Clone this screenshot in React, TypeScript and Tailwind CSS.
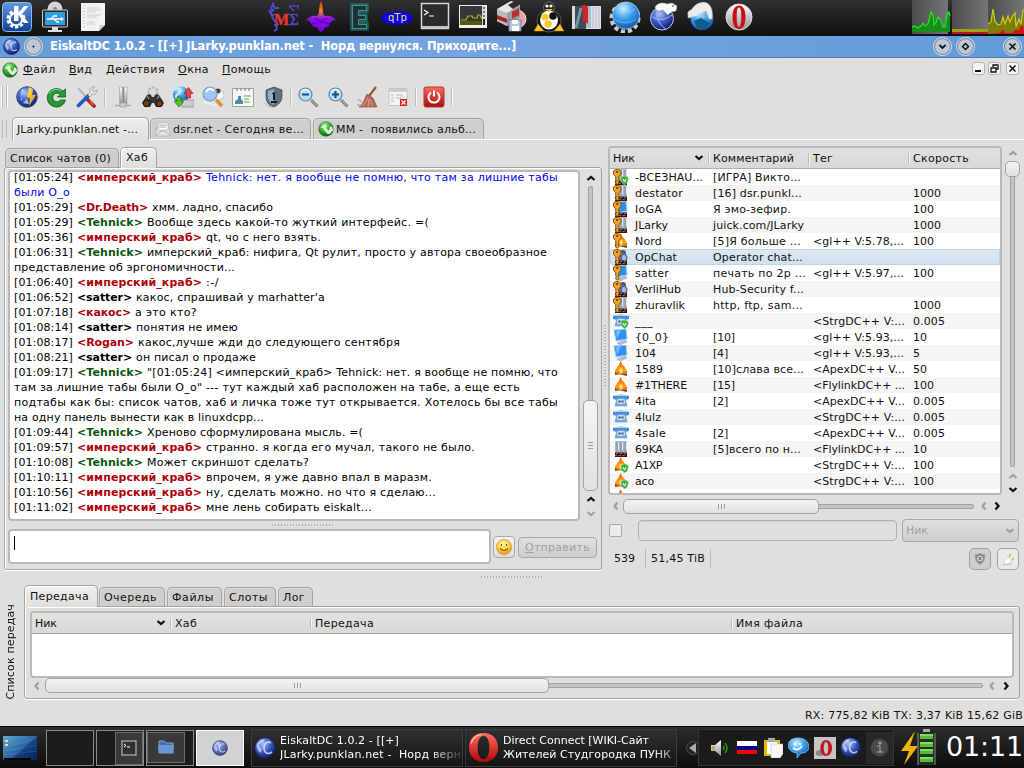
import React, { useLayoutEffect, useRef } from "react";

/* Inline text whose letter spacing is computed so that it fills width w. */
function Fit({ w, className = "", children }: { w: number; className?: string; children: React.ReactNode }) {
  const ref = useRef<HTMLSpanElement>(null);
  useLayoutEffect(() => {
    const el = ref.current;
    if (!el) return;
    el.style.letterSpacing = "0px";
    const natural = el.getBoundingClientRect().width;
    const n = (el.textContent || "").length || 1;
    el.style.letterSpacing = `${(w - natural) / n}px`;
  }, [w]);
  return (
    <span ref={ref} className={`inline-block shrink-0 whitespace-pre ${className}`}>
      {children}
    </span>
  );
}

const Defs = () => (
  <svg className="absolute size-0" aria-hidden>
    <defs>
      <radialGradient id="navy" cx=".4" cy=".3" r=".75">
        <stop offset="0" stopColor="#a9c2f5" /><stop offset=".5" stopColor="#3c5cc0" /><stop offset="1" stopColor="#0b1552" />
      </radialGradient>
      <radialGradient id="blue" cx=".4" cy=".25" r=".8">
        <stop offset="0" stopColor="#c8efff" /><stop offset=".5" stopColor="#3a9bea" /><stop offset="1" stopColor="#0b4fa4" />
      </radialGradient>
      <radialGradient id="green" cx=".4" cy=".25" r=".8">
        <stop offset="0" stopColor="#9df090" /><stop offset=".55" stopColor="#2fa32b" /><stop offset="1" stopColor="#0c5a10" />
      </radialGradient>
      <radialGradient id="smile" cx=".45" cy=".3" r=".75">
        <stop offset="0" stopColor="#fff6b0" /><stop offset=".6" stopColor="#fcc93a" /><stop offset="1" stopColor="#e08a10" />
      </radialGradient>
      <linearGradient id="silver" x2="0" y2="1"><stop stopColor="#fff" /><stop offset="1" stopColor="#8d8f92" /></linearGradient>
      <linearGradient id="red" x2="0" y2="1"><stop stopColor="#ff6a5e" /><stop offset="1" stopColor="#b00808" /></linearGradient>
      <linearGradient id="kde" x2="0" y2="1"><stop stopColor="#5d9be6" /><stop offset="1" stopColor="#123f93" /></linearGradient>
      <linearGradient id="gold" x2="1" y2="1"><stop stopColor="#ffe65a" /><stop offset="1" stopColor="#e88a00" /></linearGradient>
      <linearGradient id="hat" x2="0" y2="1"><stop stopColor="#f03a00" /><stop offset=".3" stopColor="#f08828" /><stop offset=".55" stopColor="#8a10f0" /><stop offset="1" stopColor="#7a00e0" /></linearGradient>
      <linearGradient id="fire" x2="0" y2="1"><stop stopColor="#f05a00" /><stop offset=".7" stopColor="#ffa21e" /><stop offset="1" stopColor="#e87000" /></linearGradient>
      <linearGradient id="desk" x2="1" y2="1"><stop stopColor="#6aa8cc" /><stop offset=".5" stopColor="#2c68a8" /><stop offset="1" stopColor="#06204a" /></linearGradient>
      <linearGradient id="load" x2="1" y2="0"><stop stopColor="#4b4b4b" /><stop offset="1" stopColor="#767676" /></linearGradient>
    </defs>
  </svg>
);

const Svg = ({ s, v = 32, children, className = "" }: { s: number; v?: number; children: React.ReactNode; className?: string }) => (
  <svg width={s} height={s} viewBox={`0 0 ${v} ${v}`} className={`shrink-0 ${className}`} fill="none">{children}</svg>
);

const Globe = ({ s }: { s: number }) => (
  <Svg s={s} v={22}>
    <circle cx="11" cy="11" r="10.3" fill="url(#navy)" stroke="#142266" strokeWidth=".8" />
    <path d="M5 5c2-3 4-3 5-2s-1 2-3 3-3 3-1 4 2 3 1 5-3-1-4-4 0-4 2-6z" fill="#dbe6ff" opacity=".65" />
    <path d="M17 6c-3-2-7 0-7 5s4 7 8 4" stroke="#e6eeff" strokeWidth="1.600" opacity=".75" />
  </Svg>
);
const GreenGlobe = ({ s }: { s: number }) => (
  <Svg s={s} v={18}>
    <circle cx="9" cy="9" r="8.2" fill="url(#green)" stroke="#176019" strokeWidth=".6" />
    <path d="M3 7l5-3 2 2-2 3zM6 9l3-1 3 3 2-5 2 1 1 3-4 5-3-1z" fill="#eaffe6" opacity=".9" />
  </Svg>
);

const topLeft = [
  <Svg s={32}>
    <rect x="1.5" y="1.5" width="29" height="29" rx="4" fill="url(#kde)" stroke="#8ab6ef" />
    <circle cx="15" cy="18" r="8" stroke="#fff" strokeWidth="3" strokeDasharray="3.2 1.9" />
    <circle cx="15" cy="18" r="6.2" stroke="#fff" strokeWidth="2" />
    <path d="M13 5h4.500v15H13z" fill="#fff" /><path d="M17 13l6-8h4.500l-6.500 8 6.500 9H23z" fill="#fff" />
  </Svg>,
  <Svg s={32}>
    <circle cx="16" cy="8" r="7.5" fill="#d9d4d4" /><circle cx="16" cy="8" r="2" fill="#888" />
    <rect x="3.5" y="9" width="25" height="17" rx="1" fill="#282c31" stroke="#c6cacc" /><rect x="6" y="11" width="20" height="13" fill="#329fdf" />
    <path d="M8 18h15M12 18l3-3h3M15 18l3 3h2" stroke="#fff" strokeWidth="1.3" /><path d="M22 16l3 2-3 2z" fill="#fff" />
    <path d="M13 26h6v3h-6zM9 29h14v2H9z" fill="#dedede" />
  </Svg>,
  <Svg s={32}>
    <path d="M4 2h24v22l-6 6H4z" fill="#f2f2f1" /><path d="M28 24h-5l-1 6z" fill="#c6c6c4" />
    <path d="M10 7h12M10 9h14M10 11h9M10 14h14M10 16h10M10 21h7M10 23h8" stroke="#c4c4c4" strokeWidth=".8" /><path d="M7 4v24" stroke="#aaa" strokeDasharray="1 2" />
  </Svg>,
];

const topMid = [
  <Svg s={32}>
    <text x="7" y="24" fontFamily="Liberation Serif" fontWeight="700" fontSize="16" fill="#e0382e" stroke="#e0382e" strokeWidth=".5">M</text>
    <text x="22.500" y="24" fontFamily="Liberation Serif" fontSize="16" fill="#4747c0" stroke="#4747c0" strokeWidth=".7">Σ</text>
    <path d="M7 2c-3 1-1 3 1 3-5 0-5 4-1 4-5 1-4 5 0 5M2 9l6 12M8 21c4 1 3 4 0 4 3 1 2 4-1 5M7 7h5" stroke="#4d4dd2" strokeWidth="1.800" />
    <path d="M22 5h9v3M22 5l5 5" stroke="#4747c0" strokeWidth="1.600" />
  </Svg>,
  <Svg s={32}>
    <path d="M16 1c1.500 0 1.500 6 2 10 .5 3 1 4 2 4 3-1 8 0 11 4-3 0-5 1-6 3-1 3-2 4-4 4s-2 4-5 5c-3-1-3-5-5-5s-4-1-5-4c-1-2-3-3-5-3 3-3 7-5 10-4 2 0 2-1 3-4 .5-4 .5-10 2-10z" fill="url(#hat)" />
    <path d="M10 17c4 4 8 4 12 0M7 23c5-2 13-2 18 0" stroke="#4b00a2" />
  </Svg>,
  <Svg s={32}><path d="M9 4h15v6h-8v4h7v5h-7v3h8v6H9z" fill="#1f2526" stroke="#299c9f" strokeWidth="3.500" opacity=".5" /><path d="M9.500 4.500h14v5h-8v5h7v4h-7v5h8v4h-14z" fill="#2a2e2e" stroke="#37aeae" strokeWidth=".8" /></Svg>,
  <Svg s={32}><ellipse cx="16" cy="17" rx="15.500" ry="7" fill="#0c00ea" /><text x="7" y="20" fontFamily="DejaVu Sans" fontSize="10" fill="#e9e84b">qTp</text></Svg>,
  <Svg s={32}><rect x="2.500" y="2.500" width="27" height="25" fill="#292b2d" stroke="#d6d6d6" strokeWidth="1.500" /><path d="M3 25h26v2H3z" fill="#c2c2c2" /><path d="M5 9l4 2.500L5 14M10 15h5" stroke="#fff" strokeWidth="1.200" /></Svg>,
  <Svg s={32}><rect x="2.500" y="4.500" width="27" height="22" fill="#35383b" stroke="#eee" /><path d="M25 5h4v21h-4z" fill="#dcdcdc" /><path d="M3 24h26v3H3z" fill="#eee" /><path d="M4 19h5l2-4h4l1 2h4l1-3h2l2 4" stroke="#b9b611" strokeWidth="1.200" /><path d="M3 20h21v4H3z" fill="#55580d" /><path d="M26 7h2M26 11h2M26 15h2" stroke="#777" strokeWidth="2" /><path d="M26 18h2v6h-2z" fill="#222" /></Svg>,
  <Svg s={32}><circle cx="22" cy="18" r="9" fill="#e7a3ad" stroke="#fbe6e4" /><path d="M2 8l14-8 9 3v14l-13 8-10-5z" fill="#e7e7e8" /><path d="M2 8l10 4v13L2 20z" fill="#b7babf" /><path d="M2 14l10 4v4L2 18z" fill="#b3231e" /><path d="M12 12l13-8v13l-13 8z" fill="#9a9da2" /><path d="M13 4l7-4 6 3-8 5z" fill="#2d2d2d" /><path d="M17 11l7-4v7l-7 4z" fill="#b8322b" /><path d="M14 19h12v11H14z" fill="#bcc6d5" stroke="#717d90" /><path d="M17 19h6v4h-6zM17 25h7v5h-7z" fill="#fff" /></Svg>,
  <Svg s={32}>
    <ellipse cx="16" cy="20" rx="12" ry="11" fill="#111" stroke="#999" strokeWidth=".5" /><circle cx="16" cy="6.500" r="5.500" fill="#222" stroke="#999" strokeWidth=".6" /><ellipse cx="16" cy="19" rx="9" ry="9.500" fill="#fff" />
    <circle cx="14" cy="5" r="1.600" fill="#fff" /><circle cx="18" cy="5" r="1.600" fill="#fff" /><path d="M12 8h8l-4 3z" fill="#eeba16" />
    <circle cx="12" cy="16" r="3.600" fill="#ffc82b" /><circle cx="20" cy="15" r="3.800" fill="#111" /><circle cx="15" cy="23" r="3.700" fill="#ffc82b" /><path d="M1 30l4-7 6 7zM31 30l-4-7-6 7z" fill="#ffc21e" stroke="#b57b02" strokeWidth=".5" />
  </Svg>,
  <Svg s={32}><path d="M1 5h14v23H1z" fill="#3c4c58" /><path d="M1 5h3v23H1z" fill="#d5dde2" /><path d="M15 5h15v23H15z" fill="#dfe1ea" /><path d="M15 5h5v22h-5z" fill="#aabecd" /><path d="M5 27l5-20" stroke="#7298a8" strokeWidth="3" /><path d="M10 5c3-2 7-1 7 2v16l-3-3-2 2V9z" fill="#d52222" /><path d="M22 6v21M25 6v21M28 6v21" stroke="#bbb5ca" /></Svg>,
  <Svg s={32}><circle cx="16" cy="17" r="13.500" stroke="#c5cace" strokeWidth="4" strokeDasharray="4.200 2.800" /><circle cx="17" cy="14.500" r="13.500" fill="url(#blue)" stroke="#a8dcff" strokeWidth=".7" /><path d="M5 18c7 5 15 5 22 0M8 8c5 4 12 4 18 0" stroke="#8fcffa" opacity=".6" /></Svg>,
  <Svg s={32}><circle cx="15" cy="17.500" r="11.500" fill="url(#navy)" stroke="#b9c7ff" /><path d="M5 16c7 4 13 3 20-2M11 7c-3 8 1 17 8 21" stroke="#a4b8ff" /><path d="M8 7c1-5 8-6 12-4l5-1 5 3-1 5-5 1-3 3-5-5-5 1z" fill="#fafafa" stroke="#aab" strokeWidth=".5" /><circle cx="26" cy="5" r=".8" fill="#222" /></Svg>,
  <Svg s={32}><circle cx="17" cy="17.500" r="11.500" fill="url(#blue)" /><path d="M9 20l7-3 9 5-5 7-8-2z" fill="#145a87" /><path d="M3 14c-1-4 2-4 4-6 3-5 10-8 15-6 5 3 6 9 5 16h-3l-3-8-4 2-5 3-5 1-4 1z" fill="#e9edf0" stroke="#aeb7bd" strokeWidth=".6" /></Svg>,
  <Svg s={32}><circle cx="16" cy="16" r="13" fill="url(#silver)" stroke="#ddd" /><path d="M16 4.500c-4.500 0-6.500 5-6.500 11.500s2 12 6.500 12 6.500-5.500 6.500-12-2-11.500-6.500-11.500zm0 2c1.800 0 2.300 4 2.300 9.500s-.5 10-2.300 10-2.300-4.500-2.300-10 .5-9.500 2.300-9.500z" fill="#c90f16" fillRule="evenodd" /></Svg>,
];

const zoomBase = <><path d="M14 14l6.500 6.500" stroke="#777" strokeWidth="2.800" /><path d="M14 14l6.500 6.500" stroke="#c4c4c4" strokeWidth="1" /><circle cx="8.500" cy="8.500" r="6.500" fill="#b4dcf5" stroke="#5f87a8" strokeWidth="1.200" /><path d="M4 6q4-5 9 0" stroke="#eef9ff" strokeWidth="1.500" /></>;

const tools: (React.ReactNode | null)[] = [
  <Svg s={22} v={22}><circle cx="11" cy="11" r="10.300" fill="url(#navy)" stroke="#2e548e" /><path d="M5 4c5-3 4 4 1 5s2 5-1 6zM7 17l4-4 2 5z" fill="#a5c0ed" /><path d="M13 1l4 2-1 6h4l-7 11 1-8-3-1z" fill="url(#gold)" /></Svg>,
  <Svg s={22} v={22}><path d="M19.500 3v8h-8l2.600-2.600A4.300 4.300 0 1 0 14.500 14h5A9.300 9.300 0 1 1 16.800 5z" fill="#279a3a" stroke="#075d1b" strokeWidth=".8" /><path d="M3 8c3-5 8-6 12-3" stroke="#8fdc91" /></Svg>,
  <Svg s={22} v={22}><path d="M10 12l8 8" stroke="#b51f22" strokeWidth="3.800" strokeLinecap="round" /><path d="M2 2l9 10" stroke="#b5b5b5" strokeWidth="2" /><path d="M2.500 19.500L12 10" stroke="#1f5fc4" strokeWidth="3.800" strokeLinecap="round" /><path d="M12 9l2-3c-1-4 2-6 5-5l-3 3 2 2 3-2c0 4-3 5-5 4l-2 3z" fill="#e4e5e5" stroke="#888" strokeWidth=".6" /><path d="M14 15l3 4" stroke="#f36b62" strokeWidth="1.200" /></Svg>,
  null,
  <Svg s={22} v={22}><path d="M7.500 1h3v17h-3zM12 1h3v17h-3z" fill="url(#silver)" stroke="#a8a8a8" strokeWidth=".7" /><path d="M11.300 1v18" stroke="#777" /><path d="M3 19.500h16" stroke="#aaa" strokeWidth="1.500" /><path d="M8 17h6v4H8z" fill="#ccc" stroke="#999" strokeWidth=".6" /></Svg>,
  <Svg s={22} v={22}><circle cx="11" cy="6" r="4.500" fill="#ddd" stroke="#b5b5b5" strokeWidth="2.500" strokeDasharray="2.500 1.500" /><path d="M5 9l3-1 2 3h2l2-3 3 1 5 8-3 4h-5l-2-4h-2l-2 4H3l-3-4z" fill="#343434" /><circle cx="4.500" cy="17.500" r="3.200" fill="#7a3e15" stroke="#111" /><circle cx="17.500" cy="17.500" r="3.200" fill="#7a3e15" stroke="#111" /><path d="M5 10l2 3M17 10l-2 3" stroke="#aaa" /></Svg>,
  <Svg s={22} v={22}><circle cx="9" cy="8.500" r="8" fill="url(#blue)" /><path d="M2 4c5-3 8-2 6 2S2 8 5 13" stroke="#d0e5ff" strokeWidth="2" /><path d="M10 14h12v7H10z" fill="#ccc" stroke="#888" strokeWidth=".7" /><path d="M16.500 1.500l4.500 6h-2.500V12h-4V7.500H12z" fill="#e7454b" stroke="#9e1d22" strokeWidth=".7" /><path d="M5 11h4v4h3l-5 6-5-6h3z" fill="#59bd2c" stroke="#27720c" strokeWidth=".7" /></Svg>,
  <Svg s={22} v={22}><circle cx="17" cy="9" r="5" fill="#f3f3f3" stroke="#aaa" strokeWidth=".7" /><circle cx="16" cy="5" r="2.500" fill="#444" /><path d="M2 16c5 1 7 3 13 3" stroke="#eee" strokeWidth="2" /><circle cx="8" cy="8" r="7" fill="#9bc7f0" stroke="#7f9fc0" strokeWidth="1.200" /><path d="M4 6q4-6 8-1" stroke="#fff" strokeWidth="2" /><path d="M14 14l6 6" stroke="#d6952e" strokeWidth="3.500" /></Svg>,
  <Svg s={22} v={22}><path d="M.5 2.500h21v18H.5z" fill="#f3f6f2" stroke="#9ba69b" /><path d="M5 5V2.500M9 5V2.500M13 5V2.500M17 5V2.500" stroke="#687068" /><path d="M3 18v-3l3-2v-3h3v3l2 2v3z" fill="#5089af" /><path d="M12 10h7M12 13h5M12 16h6" stroke="#8ec77f" strokeWidth="1.300" /></Svg>,
  <Svg s={22} v={22}><path d="M12 1l8 3v6c0 6-4 9-8 11-6-2-8-5-8-11V4z" fill="#5f7282" stroke="#39434e" strokeWidth=".7" /><path d="M12 3v16c-4-2-6-5-6-9V5z" fill="#9cacb8" /><path d="M10 7l3-1v8h-2V8h-1zM9 15h6v2H9z" fill="#15202a" /><path d="M2 17q4 4 8 4" stroke="#b5b5b5" /></Svg>,
  null,
  <Svg s={22} v={22}>{zoomBase}<path d="M5 8.500h7" stroke="#124c80" strokeWidth="2" /></Svg>,
  <Svg s={22} v={22}>{zoomBase}<path d="M5 8.500h7M8.500 5v7" stroke="#124c80" strokeWidth="2" /></Svg>,
  <Svg s={22} v={22}><path d="M19 1l-7 9" stroke="#8a5a30" strokeWidth="2.200" /><path d="M10 8l6 4 4 9H2c5-3 5-8 8-13z" fill="#b8685a" stroke="#8b4a3a" strokeWidth=".6" /><path d="M6 20l5-8M11 21l1-8M15 20l-2-7" stroke="#d8a08c" /><path d="M1 13l4 3M0 19h4" stroke="#bbb" strokeWidth="2" /></Svg>,
  <Svg s={22} v={22}><path d="M2 2.500h18v17H2z" fill="#f4f4f3" stroke="#c5c5c5" /><path d="M2 3h18v3H2z" fill="#ccc" /><path d="M4 9h3M9 9h7M4 12h3M9 12h5M4 15h3" stroke="#b5b5b5" /><path d="M13 13h7v7h-7z" fill="#d92020" /><path d="M14.500 14.500l4 4M18.500 14.500l-4 4" stroke="#fff" strokeWidth="1.200" /></Svg>,
  null,
  <Svg s={22} v={22}><rect x="1" y="1" width="20" height="20" rx="2" fill="url(#red)" stroke="#a04040" /><path d="M8 6.500a5.500 5.500 0 1 0 6 0M11 4.500v6" stroke="#fff" strokeWidth="2" /></Svg>,
  null,
];

const Chev = ({ d, dim }: { d: "u" | "d" | "l" | "r"; dim?: boolean }) => {
  const p = { u: "M1.500 6L5 3l3.500 3", d: "M1.500 3L5 6l3.500-3", l: "M6.500 1.500L3.500 5l3 3.500", r: "M3.500 1.500L6.500 5l-3 3.500" }[d];
  return <Svg s={10} v={10}><path d={p} stroke={dim ? "#a1a09f" : "#111"} strokeWidth="2.300" /></Svg>;
};

function TitleButton({ children }: { children?: React.ReactNode }) {
  return (
    <span className="flex size-[17px] items-center justify-center rounded-full border-[1.5px] border-[#7a7a7a] bg-[#bac8da] outline-1 outline-[#dedcda]">
      <Svg s={9} v={9}>{children}</Svg>
    </span>
  );
}

const MdiButton = ({ children }: { children: React.ReactNode }) => (
  <span className="flex size-[13px] items-center justify-center rounded-[3px] border border-[#b4b3b2] bg-[#f5f5f4]"><Svg s={9} v={9}>{children}</Svg></span>
);

const Grip = () => <div className="h-[22px] w-[5px] border-x border-[#b9b8b7] shadow-[1px_0_#fff,-1px_0_#fff]" />;

type Nick = [string, number, string];
const KRAB: Nick = ["<имперский_краб>", 129, "text-[#b00008]"];
const TEH: Nick = ["<Tehnick>", 70, "text-[#0b560b]"];
const SAT: Nick = ["<satter>", 59, "text-black"];
const DRD: Nick = ["<Dr.Death>", 75, "text-[#b00008]"];
const KAK: Nick = ["<какос>", 58, "text-[#b00008]"];
const ROG: Nick = ["<Rogan>", 61, "text-[#b00008]"];

const chat: { t?: string; n?: Nick; m: string; w: number; blue?: boolean }[] = [
  { t: "[01:05:24]", n: KRAB, m: "Tehnick: нет. я вообще не помню, что там за лишние табы", w: 352, blue: true },
  { m: "были O_o", w: 56, blue: true },
  { t: "[01:05:29]", n: DRD, m: "хмм. ладно, спасибо", w: 121 },
  { t: "[01:05:29]", n: TEH, m: "Вообще здесь какой-то жуткий интерфейс. =(", w: 282 },
  { t: "[01:05:36]", n: KRAB, m: "qt, чо с него взять.", w: 115 },
  { t: "[01:06:31]", n: TEH, m: "имперский_краб: нифига, Qt рулит, просто у автора своеобразное", w: 400 },
  { m: "представление об эргономичности...", w: 221 },
  { t: "[01:06:40]", n: KRAB, m: ":-/", w: 13 },
  { t: "[01:06:52]", n: SAT, m: "какос, спрашивай у marhatter'а", w: 189 },
  { t: "[01:07:18]", n: KAK, m: "а это кто?", w: 62 },
  { t: "[01:08:14]", n: SAT, m: "понятия не имею", w: 102 },
  { t: "[01:08:17]", n: ROG, m: "какос,лучше жди до следующего сентября", w: 262 },
  { t: "[01:08:21]", n: SAT, m: "он писал о продаже", w: 120 },
  { t: "[01:09:17]", n: TEH, m: "\"[01:05:24] <имперский_краб> Tehnick: нет. я вообще не помню, что", w: 411 },
  { m: "там за лишние табы были O_o\" --- тут каждый хаб расположен на табе, а еще есть", w: 506 },
  { m: "подтабы как бы: список чатов, хаб и личка тоже тут открывается. Хотелось бы все табы", w: 544 },
  { m: "на одну панель вынести как в linuxdcpp...", w: 250 },
  { t: "[01:09:44]", n: TEH, m: "Хреново сформулирована мысль. =(", w: 216 },
  { t: "[01:09:57]", n: KRAB, m: "странно. я когда его мучал, такого не было.", w: 269 },
  { t: "[01:10:08]", n: TEH, m: "Может скриншот сделать?", w: 162 },
  { t: "[01:10:11]", n: KRAB, m: "впрочем, я уже давно впал в маразм.", w: 226 },
  { t: "[01:10:56]", n: KRAB, m: "ну, сделать можно. но что я сделаю...", w: 230 },
  { t: "[01:11:02]", n: KRAB, m: "мне лень собирать eiskalt...", w: 166 },
];

/* User icon kinds: s server, m monitor, p phone, f fire, t penguin; k key, b bricks, v shield. */
function UserIcon({ kind }: { kind: string }) {
  const has = (c: string) => kind.includes(c);
  return (
    <Svg s={16} v={16}>
      {has("s") && <><rect x="2" y="0" width="12" height="12" rx="1" fill="#a9b8c8" /><path d="M4 1v10M8 1v10M12 1v10" stroke="#8090a2" /><path d="M5.500 1v8M9.500 1v8M13.500 1v8" stroke="#dfe7ef" /></>}
      {has("m") && <><path d="M1 1l12-1 1 10-11 2z" fill="#2f8ff5" stroke="#adc9e2" /><path d="M3 2l5-1-4 9z" fill="#76bbff" /><path d="M4 14l8-3 2 2-7 3z" fill="#b6bdd9" stroke="#9199b8" strokeWidth=".5" /></>}
      {has("p") && <><path d="M0 3q8-3 16 0v3l-4 1H4L0 6z" fill="#4390da" /><path d="M2 2.500h12" stroke="#a9d5fb" /><path d="M4 5h8l2 8H2z" fill="#6cace7" stroke="#5a98d4" strokeWidth=".6" /><rect x="4" y="6" width="8" height="5" rx="2" fill="#c9def0" /><circle cx="6.500" cy="8.500" r="1.200" fill="#52687e" /><circle cx="9.500" cy="8.500" r="1.200" fill="#52687e" /></>}
      {has("f") && <><path d="M2 13l12-2M2 11l12 3" stroke="#7b4a23" strokeWidth="2.200" /><path d="M7.500 0l2 4 1.500 1c1 2 3 4 3 6l-3 2H5l-3-2c0-3 2-4 3-6l1-1z" fill="url(#fire)" /><path d="M8 6l2 4-2 3-2-3z" fill="#ffe37a" /></>}
      {has("t") && <><circle cx="10" cy="4" r="3" fill="#505a70" /><ellipse cx="10" cy="9" rx="4.500" ry="5" fill="#506ca0" /><ellipse cx="11" cy="9" rx="2" ry="3" fill="#aabbd8" /></>}
      {has("b") && <><path d="M2 11.500h12v4.500H2z" fill="#2b1a18" /><path d="M3 12.500h2M7 12.500h2M11 12.500h2M2 14.500h2M5.500 14.500h2.500M9.500 14.500h2.500" stroke="#d2592a" strokeWidth="1.200" /></>}
      {has("v") && <><path d="M8 8q3.500-2 7 0c1 4-1 6-3.500 8C9 14 7.500 12 8 8z" fill="#3cad3e" stroke="#b5e5b3" strokeWidth=".6" /><path d="M10 10l1.500 3L13 10" stroke="#fff" /></>}
      {has("k") && <><path d="M.5 2L3 .5h2.500L8 2.500v3L5.800 7.500V14l-1.500 1.500L2.800 14v-1.500l1-1-1-1V7.500L.5 5.500z" fill="#f0a329" stroke="#7d4a0a" strokeWidth=".9" /><circle cx="4.200" cy="3" r="1.100" fill="#5a3105" /></>}
    </Svg>
  );
}

type U = [string, string, number, string, number, string, number, string];
const users: U[] = [
  ["skbv", "-ВСЕЗНАU...", 68, "[ИГРА] Викто...", 88, "", 0, ""],
  ["skb", "destator", 48, "[16] dsr.punkl...", 89, "", 0, "1000"],
  ["mkb", "IoGA", 27, "Я эмо-зефир.", 78, "", 0, "100"],
  ["skb", "JLarky", 33, "juick.com/JLarky", 91, "", 0, "1000"],
  ["fk", "Nord", 27, "[5]Я больше ...", 88, "<gl++ V:5.78,...", 91, "100"],
  ["tkb", "OpChat", 42, "Operator chat...", 90, "", 0, ""],
  ["mk", "satter", 34, "печать по 2р ...", 93, "<gl++ V:5.97,...", 91, "100"],
  ["tkb", "VerliHub", 46, "Hub-Security f...", 91, "", 0, ""],
  ["skb", "zhuravlik", 50, "http, ftp, sam...", 90, "", 0, "1000"],
  ["pv", "___", 18, "", 0, "<StrgDC++ V:...", 92, "0.005"],
  ["m", "{0_0}", 34, "[10]", 22, "<gl++ V:5.93,...", 91, "10"],
  ["m", "104", 21, "[4]", 15, "<gl++ V:5.93,...", 91, "5"],
  ["f", "1589", 28, "[10]слава все...", 91, "<ApexDC++ V...", 92, "50"],
  ["f", "#1THERE", 52, "[15]", 22, "<FlylinkDC++ ...", 92, "100"],
  ["p", "4ita", 21, "[2]", 15, "<ApexDC++ V...", 92, "0.005"],
  ["p", "4lulz", 26, "", 0, "<StrgDC++ V:...", 92, "0.005"],
  ["p", "4sale", 31, "[2]", 15, "<ApexDC++ V...", 92, "0.005"],
  ["sb", "69KA", 28, "[5]всего по н...", 88, "<FlylinkDC++ ...", 92, "10"],
  ["fv", "A1XP", 27, "", 0, "<StrgDC++ V:...", 92, "100"],
  ["fv", "aco", 19, "", 0, "<StrgDC++ V:...", 92, "100"],
  ["f", "al", 14, "                        б", 75, "", 0, ""],
];

const speedW: Record<string, number> = { "1000": 28, "100": 21, "0.005": 32, "10": 14, "5": 7, "50": 14 };

const Thumb = ({ className, children }: { className: string; children?: React.ReactNode }) => (
  <div className={`flex shrink-0 items-center justify-center rounded-[5px] border border-[#a3a2a1] bg-linear-to-b from-[#f4f4f3] to-[#e2e1e0] ${className}`}>{children}</div>
);
const RidgesH = () => <div className="h-[5px] w-[7px] bg-[repeating-linear-gradient(90deg,#9e9d9c_0_1px,transparent_1px_3px)]" />;
const RidgesV = () => <div className="h-[7px] w-[5px] bg-[repeating-linear-gradient(180deg,#9e9d9c_0_1px,transparent_1px_3px)]" />;
const HeadSep = () => <span className="block h-[11px] w-px bg-[#bcbbba] shadow-[1px_0_#f7f7f6]" />;

const Tab = ({ on, className, children }: { on?: boolean; className: string; children: React.ReactNode }) => (
  <div className={`flex shrink-0 items-center rounded-t-[5px] border border-b-0 border-[#a5a4a3] ${on ? "z-10 -mb-px bg-linear-to-b from-[#efefee] to-[#e0dfde] shadow-[inset_1px_1px_#fff]" : "bg-[#cfcecc] shadow-[inset_1px_1px_#dad9d8]"} ${className}`}>{children}</div>
);

const PanelTask = ({ children, icon }: { children: React.ReactNode; icon: React.ReactNode }) => (
  <div className="flex h-[38px] w-[212px] shrink-0 items-center overflow-hidden border border-[#3c3c3c] bg-linear-to-b from-[#303030] to-[#151515] pl-[2px] text-white">
    {icon}
    <div className="ml-[4px] flex flex-col items-start leading-[14px] mask-[linear-gradient(90deg,#000_150px,transparent_186px)]">{children}</div>
  </div>
);

export default function App() {
  return (
    <div className="flex h-[768px] w-[1024px] flex-col overflow-hidden bg-[#e0dfde] font-['DejaVu_Sans',sans-serif] text-[11px] leading-[15px] text-[#111]">
      <Defs />

      {/* Top desktop panel */}
      <div className="flex h-[36px] shrink-0 items-start bg-linear-to-b from-[#303030] to-[#101010]">
        <div className="-ml-[2px] flex w-[266px]">
          {topLeft.map((x, i) => <div key={i} className="flex w-[38px] justify-center pt-px">{x}</div>)}
        </div>
        {topMid.map((x, i) => <div key={i} className="flex w-[38px] shrink-0 justify-center pt-px">{x}</div>)}
        <svg width="112" height="34" viewBox="0 0 112 34" className="ml-[154px] shrink-0">
          <rect width="36" height="34" fill="url(#load)" /><rect x="40" width="36" height="34" fill="url(#load)" /><rect x="76" width="36" height="34" fill="url(#load)" />
          <path d="M0 27l3-1 3 2 3-2 2-3 2 3 3-2 1-4 2-8 2 3 1 10 2-2 2-6 3 4 2 6h2l2-12 2-3 1 4v16H0z" fill="#168d1c" />
          <path d="M0 27l3-1 3 2 3-2 2-3 2 3 3-2 1-4 2-8 2 3 1 10 2-2 2-6 3 4 2 6h2l2-12 2-3 1 4" fill="none" stroke="#0cf21a" strokeWidth="1.200" />
          <path d="M40 32h36v2H40z" fill="#b31919" /><path d="M40 29h36v3H40z" fill="#a0a010" />
          <path d="M76 24l3-2 2-13 2 12 3 4 3-1 2-7 2 7 3-8 2 6 2-5 3-4 1 14 3-8 2 5 2-14h1v24H76z" fill="#7d7d0c" />
          <path d="M76 24l3-2 2-13 2 12 3 4 3-1 2-7 2 7 3-8 2 6 2-5 3-4 1 14 3-8 2 5 2-14h1" fill="none" stroke="#cfcf0c" strokeWidth="1.200" />
          <path d="M76 34l12-1 3-4 2 4h7l3-3h4l3-6 2 5v5z" fill="#d01414" />
        </svg>
      </div>

      {/* Title bar */}
      <div className="flex h-[22px] shrink-0 items-center border-b border-[#497db9] bg-linear-to-r from-[#659bd9] via-[#75a4e0] via-45% to-[#629bdb] pl-[3px]">
        <Globe s={17} />
        <span className="ml-[5px]"><TitleButton><circle cx="4.500" cy="4.500" r="1" fill="#111" /></TitleButton></span>
        <Fit w={466} className="ml-[8px] text-[11.500px] font-bold text-white">{"EiskaltDC 1.0.2 - [[+] JLarky.punklan.net -  Норд вернулся. Приходите...]"}</Fit>
        <span className="ml-auto"><TitleButton><path d="M1.500 3l3 3 3-3" stroke="#111" strokeWidth="1.800" /></TitleButton></span>
        <span className="ml-[6px]"><TitleButton><path d="M4.500 1.500l3 3-3 3-3-3z" stroke="#111" strokeWidth="1.500" /></TitleButton></span>
        <span className="mr-[3px] ml-[30px]"><TitleButton><path d="M1.500 1.500l6 6M7.500 1.500l-6 6" stroke="#111" strokeWidth="1.600" /></TitleButton></span>
      </div>

      {/* Menu bar */}
      <div className="flex h-[23px] shrink-0 items-center pl-[2px]">
        <GreenGlobe s={16} />
        <Fit w={33} className="ml-[5px]"><u>Ф</u>айл</Fit>
        <Fit w={23} className="ml-[13px]"><u>В</u>ид</Fit>
        <Fit w={59} className="ml-[14px]"><u>Д</u>ействия</Fit>
        <Fit w={31} className="ml-[13px]"><u>О</u>кна</Fit>
        <Fit w={49} className="ml-[13px]"><u>П</u>омощь</Fit>
        <div className="mr-[5px] mb-[3px] ml-auto flex items-center gap-[3px]">
          <MdiButton><path d="M1 7h6" stroke="#111" strokeWidth="2" /></MdiButton>
          <MdiButton><path d="M3 3V1h5v4H6" stroke="#111" strokeWidth="1.300" /><path d="M1 4h5v4H1z" stroke="#111" strokeWidth="1.300" /></MdiButton>
          <span className="ml-[2px]"><MdiButton><path d="M1.500 1.500l6 6M7.500 1.500l-6 6" stroke="#111" strokeWidth="1.600" /></MdiButton></span>
        </div>
      </div>

      {/* Tool bar */}
      <div className="flex h-[32px] shrink-0 items-center pl-[2px]">
        <Grip />
        <div className="flex items-center pl-[5px]">
          {tools.map((t, i) => t
            ? <div key={i} className="flex w-[30px] justify-center">{t}</div>
            : <div key={i} className="flex w-[5.500px] justify-center"><span className="h-[18px] w-px bg-[#bcbbba] shadow-[1px_0_#f7f7f6]" /></div>)}
        </div>
      </div>

      {/* Hub tabs */}
      <div className="flex h-[30px] shrink-0 items-end pb-[3px] pl-[2px]">
        <div className="mb-[2px] flex h-[18px] overflow-hidden"><Grip /></div>
        <div className="ml-[5px] flex grow items-end border-b border-white">
          <Tab on className="h-[23px] w-[137px] pl-[4px]"><Fit w={121}>JLarky.punklan.net -...</Fit></Tab>
          <Tab className="ml-[1px] h-[21px] w-[161px] pl-[4px]">
            <Svg s={16} v={16}><path d="M1 7h14v8H1z" fill="#dfe3e7" stroke="#b5b9bf" /><path d="M3 2h10v7H3z" fill="#fff" stroke="#aaa" strokeWidth=".6" /><path d="M4 4h8M4 6h7" stroke="#aaa" /><path d="M1 15l5-5h4l5 5" stroke="#b0b5bb" /></Svg>
            <Fit w={131} className="ml-[2px]">dsr.net - Сегодня ве...</Fit>
          </Tab>
          <Tab className="ml-[2px] h-[21px] w-[171px] pl-[4px]"><GreenGlobe s={16} /><Fit w={140} className="ml-[2px]">{"MM -  появились альб..."}</Fit></Tab>
        </div>
      </div>

      {/* Main area */}
      <div className="flex h-[429px] shrink-0 pl-[4px]">
        <div className="flex w-[598px] shrink-0 flex-col pt-[3px]">
          <div className="flex h-[21px] items-end pl-px">
            <Tab className="h-[19px] w-[114px] pl-[4px]"><Fit w={101}>Список чатов (0)</Fit></Tab>
            <Tab on className="ml-px h-[21px] w-[37px] pb-[2px] pl-[5px]"><Fit w={22}>Хаб</Fit></Tab>
          </div>
          <div className="flex h-[403px] flex-col rounded-[3px] border border-[#a5a4a3] px-[3px] pt-[2px] shadow-[inset_1px_1px_#fff,0_1px_#fff]">
            <div className="flex h-[351px]">
              <div className="w-[572px] overflow-hidden rounded-[4px] border-2 border-[#bab9b8] bg-white pl-[4px] text-black">
                <div className="-mt-[2px]">
                  {chat.map((c, i) => (
                    <div key={i} className="flex h-[15px] whitespace-pre">
                      {c.t && <span className="w-[63px] shrink-0"><Fit w={59}>{c.t}</Fit></span>}
                      {c.n && <span className={`shrink-0 font-bold ${c.n[2]}`}><Fit w={c.n[1] - 4}>{c.n[0]}</Fit></span>}
                      <Fit w={c.w} className={`${c.n ? "ml-[4px]" : ""} ${c.blue ? "text-[#0000f0]" : ""}`}>{c.m}</Fit>
                    </div>
                  ))}
                </div>
              </div>
              <div className="ml-[3px] flex w-[15px] flex-col items-center pt-[4px]">
                <Chev d="u" />
                <div className="mt-[2px] w-[5px] grow rounded-t-full border border-b-0 border-[#a3a2a1] bg-[#c5c4c3]" />
                <Thumb className="h-[91px] w-[15px]"><RidgesV /></Thumb>
                <div className="mt-[4px]"><Chev d="u" /></div>
                <div className="mt-[4px] mb-[2px]"><Chev d="d" dim /></div>
              </div>
            </div>
            <div className="flex h-[8px] items-center justify-center pr-[1px]"><div className="h-[2px] w-[62px] bg-[repeating-linear-gradient(90deg,#b0afae_0_1px,transparent_1px_3px)]" /></div>
            <div className="flex h-[35px] items-center">
              <div className="h-[35px] w-[483px] rounded-[4px] border-2 border-[#bab9b8] bg-white px-[4px] py-[5px]"><div className="h-[14px] w-px bg-black" /></div>
              <div className="ml-[2px] flex size-[22px] items-center justify-center rounded-[4px] border border-[#a9a8a7] bg-linear-to-b from-[#f4f4f3] to-[#dddcdb]">
                <Svg s={16} v={16}><circle cx="8" cy="8" r="7.500" fill="url(#smile)" stroke="#bf7809" strokeWidth=".6" /><path d="M5.500 5v2M10.500 5v2M4 9.500q4 4 8 0" stroke="#8a5a10" strokeWidth="1.100" /></Svg>
              </div>
              <div className="mt-px ml-[3px] flex h-[21px] w-[79px] items-center justify-center rounded-[4px] border border-[#a9a8a7] bg-linear-to-b from-[#e1e0df] to-[#cfcecd] text-[#a3a2a1]"><Fit w={65}><u>О</u>тправить</Fit></div>
            </div>
          </div>
        </div>

        <div className="flex w-[6px] shrink-0 items-center justify-center pb-[4px]"><div className="h-[62px] w-[2px] bg-[repeating-linear-gradient(180deg,#b0afae_0_1px,transparent_1px_3px)]" /></div>

        {/* User list */}
        <div className="flex w-[412px] flex-col pt-[3px]">
          <div className="flex h-[349px]">
            <div className="flex w-[394px] flex-col overflow-hidden rounded-[4px] border-2 border-[#bab9b8] bg-white">
              <div className="flex h-[21px] shrink-0 items-center border-b border-[#b0afae] bg-linear-to-b from-[#e3e2e1] to-[#d9d8d7] pl-[3px]">
                <Fit w={22}>Ник</Fit><span className="ml-[59px]"><Chev d="d" /></span><span className="ml-[4px]"><HeadSep /></span>
                <Fit w={81} className="ml-[4px]">Комментарий</Fit><span className="ml-[14px]"><HeadSep /></span>
                <Fit w={20} className="ml-[4px]">Тег</Fit><span className="ml-[75px]"><HeadSep /></span>
                <Fit w={56} className="ml-[4px]">Скорость</Fit>
              </div>
              {users.map((u, i) => (
                <div key={i} className={`flex h-[16px] shrink-0 items-center ${i === 5 ? "rounded-l-[3px] bg-linear-to-b from-[#dce8f2] to-[#d0e0ed] shadow-[inset_0_0_0_1px_#bfd3ea]" : i % 2 ? "bg-[#f6f5f4]" : "bg-white"}`}>
                  <span className="flex w-[25px] shrink-0 pl-[3px]"><UserIcon kind={u[0]} /></span>
                  <span className="flex w-[78px] shrink-0">{u[1] && <Fit w={u[2]}>{u[1]}</Fit>}</span>
                  <span className="flex w-[100px] shrink-0">{u[3] && <Fit w={u[4]}>{u[3]}</Fit>}</span>
                  <span className="flex w-[100px] shrink-0">{u[5] && <Fit w={u[6]}>{u[5]}</Fit>}</span>
                  {u[7] && <Fit w={speedW[u[7]]}>{u[7]}</Fit>}
                </div>
              ))}
            </div>
            <div className="ml-[3px] flex w-[15px] flex-col items-center pt-[3px]">
              <Chev d="u" dim />
              <Thumb className="mt-[2px] h-[16px] w-[15px]" />
              <div className="w-[5px] grow rounded-b-full border border-t-0 border-[#a3a2a1] bg-[#c5c4c3]" />
              <div className="mt-[5px]"><Chev d="u" dim /></div>
              <div className="mt-[3px]"><Chev d="d" /></div>
            </div>
          </div>
          <div className="flex h-[22px] items-center pr-[18px] pl-[3px]">
            <Chev d="l" dim />
            <Thumb className="ml-[2px] h-[15px] w-[196px]"><RidgesH /></Thumb>
            <div className="h-[5px] grow rounded-r-full border border-l-0 border-[#a3a2a1] bg-[#c5c4c3]" />
            <span className="ml-[5px]"><Chev d="l" dim /></span><span className="ml-[3px]"><Chev d="r" /></span>
          </div>
          <div className="mt-[2px] flex h-[23px] items-center pl-px">
            <div className="size-[13px] rounded-[2px] border border-[#a9a8a7] bg-[#ececeb]" />
            <div className="ml-[16px] h-[21px] w-[259px] rounded-[4px] border border-[#b2b1b0] shadow-[inset_0_1px_#d1d0cf]" />
            <div className="ml-[5px] flex h-[23px] w-[117px] items-center rounded-[4px] border border-[#a9a8a7] bg-linear-to-b from-[#e1e0df] to-[#cfcecd] pl-[3px] text-[#a3a2a1]"><Fit w={22}>Ник</Fit><span className="mr-[3px] ml-auto"><Chev d="d" dim /></span></div>
          </div>
          <div className="mt-[5px] flex h-[23px] items-center pl-[6px]">
            <Fit w={21}>539</Fit><span className="ml-[10px] h-[19px] w-px bg-[#bcbbba]" />
            <Fit w={54} className="ml-[5px]">51,45 TiB</Fit><span className="ml-[5px] h-[19px] w-px bg-[#bcbbba]" />
            <div className="ml-auto flex size-[22px] items-center justify-center rounded-[5px] border border-[#a3a2a1] bg-[#cfcecd]"><Svg s={14} v={14}><path d="M7 1.500l5 1.500c0 5-2 8-5 9.500C4 11 2 8 2 3z" fill="#888" stroke="#a5a5a5" /><circle cx="7" cy="6.500" r="2.800" fill="#dadada" /><path d="M5.700 5.200l2.600 2.600M8.300 5.200L5.700 7.800" stroke="#666" strokeWidth="1.100" /></Svg></div>
            <div className="mr-px ml-[6px] flex size-[22px] items-center justify-center rounded-[5px] border border-[#a3a2a1] bg-[#ebeae9]"><Svg s={14} v={14}><path d="M2 12.500q5 1 9-1" stroke="#c1c1c0" /><path d="M3 9l4-4 4 4-4 3H3z" fill="#fdfdfd" stroke="#c3c3c3" strokeWidth=".6" /><path d="M8 5l2-3M11 8l2-2" stroke="#d8b45a" strokeWidth="1.500" /></Svg></div>
          </div>
        </div>
      </div>

      <div className="flex h-[12px] shrink-0 items-center justify-center pb-[2px]"><div className="h-[2px] w-[62px] bg-[repeating-linear-gradient(90deg,#b0afae_0_1px,transparent_1px_3px)]" /></div>

      {/* Transfers dock */}
      <div className="flex h-[116px] shrink-0">
        <div className="flex w-[24px] shrink-0 items-end justify-center pr-[3px]">
          <div className="rotate-180 [writing-mode:vertical-rl]">
            <span className="tracking-[0.150px] whitespace-nowrap">Список передач</span>
          </div>
        </div>
        <div className="flex w-[996px] flex-col">
          <div className="flex h-[22px] items-end gap-[2px]">
            <Tab on className="-mr-px h-[22px] w-[74px] pl-[5px]"><Fit w={59}>Передача</Fit></Tab>
            <Tab className="h-[19px] w-[66px] pl-[4px]"><Fit w={53}>Очередь</Fit></Tab>
            <Tab className="h-[19px] w-[55px] pl-[4px]"><Fit w={42}>Файлы</Fit></Tab>
            <Tab className="h-[19px] w-[52px] pl-[4px]"><Fit w={39}>Слоты</Fit></Tab>
            <Tab className="h-[19px] w-[35px] pl-[4px]"><Fit w={22}>Лог</Fit></Tab>
          </div>
          <div className="flex h-[93px] flex-col rounded-[3px] border border-[#a5a4a3] px-[5px] pt-[4px] shadow-[inset_1px_1px_#fff,0_1px_#fff]">
            <div className="h-[67px] shrink-0 overflow-hidden rounded-[4px] border-2 border-[#bab9b8] bg-white">
              <div className="flex h-[21px] items-center border-b border-[#a5a4a3] bg-linear-to-b from-[#e3e2e1] to-[#d9d8d7] pl-[3px]">
                <Fit w={22}>Ник</Fit><span className="ml-[99px]"><Chev d="d" /></span><span className="ml-[4px]"><HeadSep /></span>
                <Fit w={22} className="ml-[4px]">Хаб</Fit><span className="ml-[113px]"><HeadSep /></span>
                <Fit w={59} className="ml-[4px]">Передача</Fit><span className="ml-[357px]"><HeadSep /></span>
                <Fit w={67} className="ml-[4px]">Имя файла</Fit>
              </div>
            </div>
            <div className="flex h-[15px] items-center pr-[3px] pl-[2px]">
              <Chev d="l" dim />
              <Thumb className="ml-[3px] h-[15px] w-[504px]"><RidgesH /></Thumb>
              <div className="h-[5px] grow rounded-r-full border border-l-0 border-[#a3a2a1] bg-[#c5c4c3]" />
              <span className="ml-[4px]"><Chev d="l" dim /></span><span className="ml-[4px]"><Chev d="r" /></span>
            </div>
          </div>
        </div>
      </div>

      {/* Status bar */}
      <div className="flex h-[26px] shrink-0 items-center justify-end pt-[4px] pr-px"><Fit w={218}>RX: 775,82 KiB TX: 3,37 KiB 15,62 GiB</Fit></div>

      {/* Bottom desktop panel */}
      <div className="flex h-[42px] shrink-0 items-center border-t border-black bg-linear-to-b from-[#2c2c2c] to-[#0d0d0d] pl-[3px]">
        <Svg s={34} v={34}><path d="M0 5h34v24H0z" fill="url(#desk)" /><path d="M0 16q17-3 34-9M0 20q17-2 34-6M0 24q17-2 34-4" stroke="#6096c8" opacity=".5" /><path d="M34 5L10 27h24z" fill="#03246a" opacity=".45" /><path d="M1 27h27v2H1z" fill="#050505" /><path d="M2 9h3v2H2z" fill="#ddd" /><path d="M2 13h3v2H2z" fill="#d8e6a3" /></Svg>
        <div className="ml-[9px] flex gap-[2px]">
          <div className="h-[36px] w-[48px] border border-[#8a8a8a] bg-[#1c1c1c]" />
          <div className="flex h-[36px] w-[48px] justify-end border border-[#8a8a8a] bg-[#1c1c1c] pt-px"><div className="flex w-[28px] items-center justify-center border border-[#6d6d6d] bg-[#393939]"><Svg s={16} v={16}><rect x="1" y="1" width="14" height="14" fill="#303030" stroke="#aaa" strokeWidth="1.300" /><path d="M3 4l2 1.500L3 7M6 7h3" stroke="#fff" /></Svg></div></div>
          <div className="h-[36px] w-[48px] border border-[#8a8a8a] bg-[#1c1c1c] pt-px"><div className="flex h-[31px] w-[38px] items-center justify-center border border-[#6d6d6d] bg-[#393939]"><Svg s={16} v={16}><path d="M1 2h5l2 2h7v10H1z" fill="#3f6eaa" stroke="#7ba7db" /><path d="M0 6h16l-1 8H1z" fill="#6798d3" /></Svg></div></div>
          <div className="flex h-[36px] w-[48px] items-center justify-center border border-white bg-[#d2d2d2]"><span className="flex opacity-80"><Globe s={16} /></span></div>
        </div>
        <div className="ml-[7px] flex gap-[2px]">
          <PanelTask icon={<Globe s={22} />}><Fit w={119}>EiskaltDC 1.0.2 - [[+]</Fit><Fit w={181}>{"JLarky.punklan.net -  Норд верн"}</Fit></PanelTask>
          <PanelTask icon={<Svg s={31}><path fillRule="evenodd" d="M16 1C7 1 1 7 1 16s6 15 15 15 15-6 15-15S25 1 16 1zm0 3c4 0 6 5 6 12s-2 12-6 12-6-5-6-12 2-12 6-12z" fill="url(#red)" /><path d="M3 12C5 6 9 3 14 2.500" stroke="#ffb5ad" strokeWidth="1.500" /></Svg>}><Fit w={146}>Direct Connect [WIKI-Сайт</Fit><Fit w={168}>Жителей Студгородка ПУНК</Fit></PanelTask>
        </div>
        <Svg s={14} v={14} className="ml-[9px]"><circle cx="7" cy="7" r="6.500" fill="#222" stroke="#4c4c4c" /><path d="M10 2v10L3 7z" fill="#ababab" /></Svg>
        <div className="-ml-[2px] flex h-[37px] w-[196px] shrink-0 items-center border border-[#353535] bg-[#1b1b1b] pl-[12px]">
          <Svg s={18} v={18}><path d="M0 6h4l6-5v16l-6-5H0z" fill="url(#silver)" /><path d="M1 7h3v4H1z" fill="#c8a45b" /><path d="M12 7q2 2 0 4M14 4q4 5 0 10" stroke="#2c9d13" strokeWidth="1.400" /></Svg>
          <div className="ml-[8px] flex h-[13px] w-[20px] shrink-0 flex-col"><span className="grow bg-white" /><span className="h-[4px] bg-[#080093]" /><span className="h-[4px] bg-[#f40505]" /></div>
          <Svg s={20} v={20} className="ml-[6px]"><path d="M1 2h16v16H1z" fill="#e2b80b" /><path d="M4 4h10v12H4z" fill="#fff" /><path d="M5 0h7v4H5z" fill="#aaa" /><path d="M8 6h12v10l-3 4H8z" fill="#f8f8f5" stroke="#bbb" strokeWidth=".5" /></Svg>
          <Svg s={21} v={21} className="ml-[5px]"><path d="M10 1c14 0 14 16 3 15l-4 5v-5C-3 15-3 1 10 1z" fill="url(#blue)" stroke="#8fd7ff" strokeWidth=".7" /><path d="M7 6v3M12 6v2M5 11q5 4 9-2" stroke="#fff" strokeWidth="1.700" /></Svg>
          <div className="ml-[5px] flex size-[22px] shrink-0 items-center justify-center bg-[#c5c5c5]"><Svg s={18} v={18}><ellipse cx="4" cy="14" rx="5" ry="3" fill="#888" /><path fillRule="evenodd" d="M10 1c-7 0-8 16 0 16s8-16 0-16zm0 2c3 0 3 12 0 12s-3-12 0-12z" fill="#c3181d" /></Svg></div>
          <span className="ml-[4px] flex"><Globe s={21} /></span>
          <div className="ml-[5px] flex h-[32px] w-[27px] shrink-0 items-center justify-center bg-[#282828]"><Svg s={19} v={19}><circle cx="9.500" cy="9.500" r="9" fill="#4b4b4b" stroke="#303030" /><path d="M9 4h2v2H9zM7 8h3v6M7 14h6" stroke="#aaa" /></Svg></div>
        </div>
        <svg width="36" height="38" viewBox="0 0 36 38" className="ml-[7px] shrink-0">
          <path d="M14 2L0 22h8l-5 14 14-19H9z" fill="#efb306" />
          <path d="M22 0h7v3h-7z" fill="#aaa" /><path d="M17 4h17v32H17z" fill="#2b2b2b" /><path d="M17 4v32M34 4v32" stroke="#8a8a8a" />
          <path d="M19 5h13v5H19zM19 13h13v5H19zM19 20h13v5H19zM19 28h13v5H19z" fill="#50bd32" /><path d="M19 5h13v2H19zM19 13h13v2H19zM19 20h13v2H19zM19 28h13v2H19z" fill="#7be05a" />
        </svg>
        <Fit w={77} className="mb-[2px] ml-[9px] text-[27px] leading-[30px] text-white">01:11</Fit>
      </div>
    </div>
  );
}
